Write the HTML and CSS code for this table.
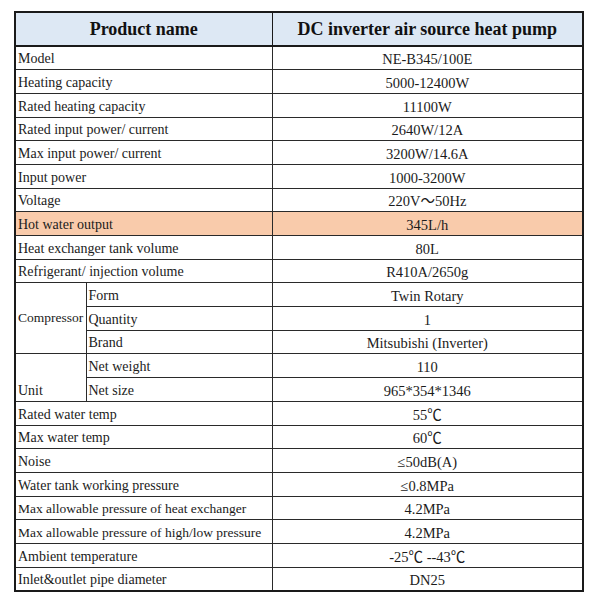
FILE: index.html
```html
<!DOCTYPE html>
<html>
<head>
<meta charset="utf-8">
<link rel="stylesheet" href="styles.css">
</head>
<body>
<table class="spec">
  <colgroup>
    <col class="c1"><col class="c2"><col class="c3">
  </colgroup>
  <tr class="head">
    <th colspan="2">Product name</th>
    <th>DC inverter air source heat pump</th>
  </tr>
  <tr><td colspan="2">Model</td><td class="val">NE-B345/100E</td></tr>
  <tr><td colspan="2">Heating capacity</td><td class="val">5000-12400W</td></tr>
  <tr><td colspan="2">Rated heating capacity</td><td class="val">11100W</td></tr>
  <tr><td colspan="2">Rated input power/ current</td><td class="val">2640W/12A</td></tr>
  <tr><td colspan="2">Max input power/ current</td><td class="val">3200W/14.6A</td></tr>
  <tr><td colspan="2">Input power</td><td class="val">1000-3200W</td></tr>
  <tr><td colspan="2">Voltage</td><td class="val">220V～50Hz</td></tr>
  <tr class="hl"><td colspan="2">Hot water output</td><td class="val">345L/h</td></tr>
  <tr><td colspan="2">Heat exchanger tank volume</td><td class="val">80L</td></tr>
  <tr><td colspan="2">Refrigerant/ injection volume</td><td class="val">R410A/2650g</td></tr>
  <tr><td rowspan="3" class="mid">Compressor</td><td>Form</td><td class="val">Twin Rotary</td></tr>
  <tr><td>Quantity</td><td class="val">1</td></tr>
  <tr><td>Brand</td><td class="val">Mitsubishi (Inverter)</td></tr>
  <tr><td rowspan="2">Unit</td><td>Net weight</td><td class="val">110</td></tr>
  <tr><td>Net size</td><td class="val">965*354*1346</td></tr>
  <tr><td colspan="2">Rated water temp</td><td class="val">55℃</td></tr>
  <tr><td colspan="2">Max water temp</td><td class="val">60℃</td></tr>
  <tr><td colspan="2">Noise</td><td class="val">≤50dB(A)</td></tr>
  <tr><td colspan="2">Water tank working pressure</td><td class="val">≤0.8MPa</td></tr>
  <tr><td colspan="2" class="sm">Max allowable pressure of heat exchanger</td><td class="val">4.2MPa</td></tr>
  <tr><td colspan="2" class="sm">Max allowable pressure of high/low pressure</td><td class="val">4.2MPa</td></tr>
  <tr><td colspan="2">Ambient temperature</td><td class="val">-25℃ --43℃</td></tr>
  <tr><td colspan="2">Inlet&amp;outlet pipe diameter</td><td class="val">DN25</td></tr>
</table>
</body>
</html>
```

FILE: styles.css
```css
html, body {
  margin: 0;
  padding: 0;
  background: #ffffff;
}
body {
  padding: 11px 0 0 14px;
  font-family: "Liberation Serif", "Noto Sans CJK SC", serif;
  color: #1b1b1b;
}
.spec {
  border-collapse: collapse;
  table-layout: fixed;
  width: 568px;
  border: 2px solid #1a1a1a;
}
.c1 { width: 71px; }
.c2 { width: 186px; }
.c3 { width: 311px; }
.spec tr { height: 23.7px; }
.spec tr.head { height: 34px; }
.spec th {
  background: #dde8f4;
  font-size: 18px;
  font-weight: bold;
  text-align: center;
  vertical-align: middle;
  border: 1px solid #1a1a1a;
  border-bottom: 2px solid #1a1a1a;
  padding: 0;
  color: #111;
}
.spec td {
  font-size: 14px;
  line-height: 16px;
  border: 1px solid #2a2a2a;
  padding: 0 2px 2px 2px;
  vertical-align: bottom;
  text-align: left;
  white-space: nowrap;
  overflow: hidden;
}
.spec td.val {
  text-align: center;
  font-size: 14.5px;
}
.spec td.mid { vertical-align: middle; padding: 0 0 0 2px; font-size: 13.5px; }
.spec td.sm { font-size: 13.5px; }
.spec tr.hl td { background: #f9cbab; }
```
